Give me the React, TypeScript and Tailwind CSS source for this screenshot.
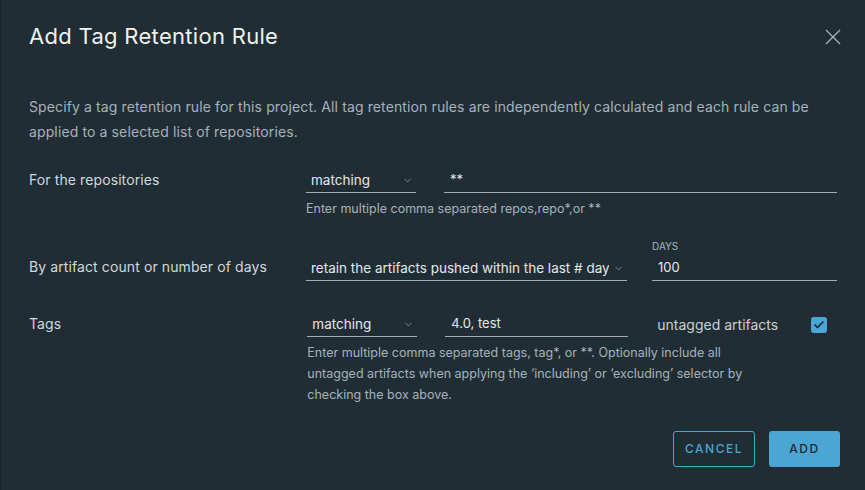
import { Check, ChevronDown } from "lucide-react";

function Select({ value, width }: { value: string; width: string }) {
  return (
    <div
      className={`${width} relative flex h-[25px] items-center overflow-hidden border-b border-[#a3afb6] pl-[5px] pr-[18px]`}
    >
      <span className="overflow-hidden whitespace-nowrap text-[13.5px] text-[#e4e8eb]">{value}</span>
      <ChevronDown
        className="absolute right-[3px] top-[7px] h-[11px] w-[11px] text-[#a3afb6]"
        strokeWidth={1.5}
      />
    </div>
  );
}

function Input({ value, width }: { value: string; width: string }) {
  return (
    <div className={`${width} flex h-[25px] items-center border-b border-[#a3afb6] pl-[6px]`}>
      <span className="text-[13px] text-[#e4e8eb]">{value}</span>
    </div>
  );
}

export default function App() {
  return (
    <div
      className="h-[490px] w-[865px] overflow-hidden border-l border-[#182228] bg-[#212d34] text-[#d2d9dd]"
      style={{ fontFamily: "Inter, 'Noto Sans', sans-serif" }}
    >
      <div className="flex items-start justify-between pl-[28px] pr-[24px] pt-[22px]">
        <h3 className="text-[22px] font-normal leading-[28px] tracking-[0.3px] text-[#eef1f3]">
          Add Tag Retention Rule
        </h3>
        <svg className="mt-[7px] h-[16px] w-[16px] text-[#a3afb6]" viewBox="0 0 16 16">
          <path d="M1 1 L15 15 M15 1 L1 15" stroke="currentColor" strokeWidth="1.4" fill="none" />
        </svg>
      </div>

      <div className="px-[28px] pt-[44px]">
        <p className="w-[800px] text-[14px] leading-[25px] tracking-[0.12px] text-[#a6b2ba]">
          Specify a tag retention rule for this project. All tag retention rules are independently
          calculated and each rule can be applied to a selected list of repositories.
        </p>

        {/* repositories */}
        <div className="mt-[24px] flex">
          <div className="w-[279px] pt-[2px] text-[14px] leading-[20px] tracking-[0.1px]">
            For the repositories
          </div>
          <div className="flex w-[531px] flex-col">
            <div className="flex gap-[28px]">
              <Select value="matching" width="w-[110px]" />
              <Input value="**" width="w-[393px]" />
            </div>
            <div className="mt-[6px] text-[12.5px] leading-[20px] text-[#a6b2ba]">
              Enter multiple comma separated repos,repo*,or **
            </div>
          </div>
        </div>

        {/* count or days */}
        <div className="mt-[21px] flex items-end">
          <div className="w-[279px] pb-[4px] text-[14px] leading-[20px] tracking-[0.1px]">
            By artifact count or number of days
          </div>
          <div className="flex w-[531px] items-end gap-[25px]">
            <Select
              value="retain the artifacts pushed within the last # days"
              width="w-[321px]"
            />
            <div className="flex flex-col">
              <span className="mb-[4px] text-[10px] leading-[12px] text-[#a6b2ba]">DAYS</span>
              <Input value="100" width="w-[185px]" />
            </div>
          </div>
        </div>

        {/* tags */}
        <div className="mt-[31px] flex">
          <div className="w-[279px] pt-[2px] text-[14px] leading-[20px] tracking-[0.1px]">Tags</div>
          <div className="flex w-[531px] flex-col">
            <div className="flex items-center">
              <Select value="matching" width="w-[110px]" />
              <div className="ml-[28px]">
                <Input value="4.0, test" width="w-[183px]" />
              </div>
              <span className="ml-[29px] text-[14px] text-[#c8d0d5]">untagged artifacts</span>
              <div className="ml-auto mr-[10px] flex h-[16px] w-[16px] items-center justify-center rounded-[3px] bg-[#4ba6d4]">
                <Check className="h-[12px] w-[12px] text-[#1b2a32]" strokeWidth={3.5} />
              </div>
            </div>
            <div className="mt-[5px] w-[455px] text-[12.5px] leading-[21px] text-[#a6b2ba]">
              Enter multiple comma separated tags, tag*, or **. Optionally include all untagged
              artifacts when applying the ‘including’ or ‘excluding’ selector by checking the box
              above.
            </div>
          </div>
        </div>
      </div>

      <div className="mt-[26px] flex justify-end gap-[14px] pr-[25px]">
        <button className="h-[36px] w-[82px] rounded-[3px] border border-[#4ba6d4] text-[12px] font-medium tracking-[1.5px] text-[#4ba6d4]">
          CANCEL
        </button>
        <button className="h-[36px] w-[71px] rounded-[3px] bg-[#4ba6d4] text-[12px] font-medium tracking-[1.5px] text-[#1b2a32]">
          ADD
        </button>
      </div>
    </div>
  );
}
